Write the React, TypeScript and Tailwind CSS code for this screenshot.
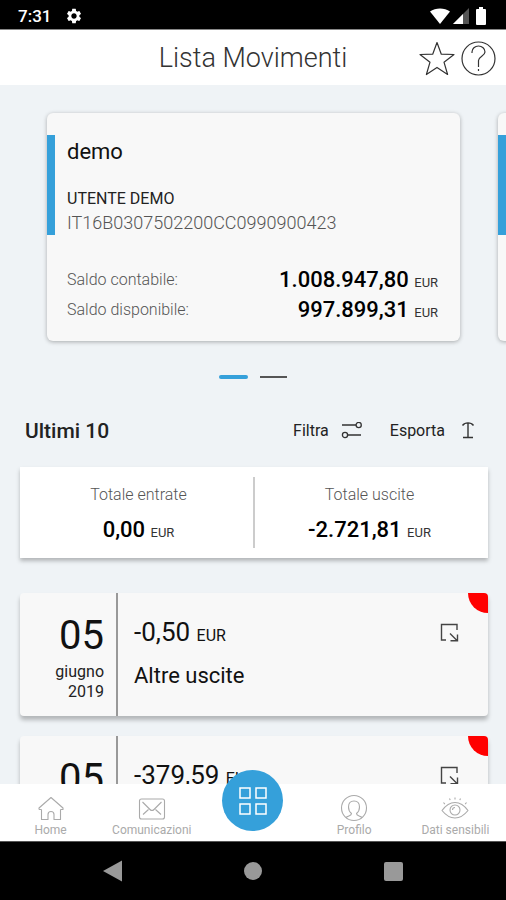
import type { ReactNode } from "react";
import { MdSettings } from "react-icons/md";

const Amount = ({ value, className = "" }: { value: string; className?: string }) => {
    return(
        <span className={`block whitespace-nowrap text-[22px] font-medium text-black ${className}`}>
            {value} <span className="text-[13px] leading-none font-normal text-[#333]">EUR</span>
        </span>
    )
};

const StatusBar = () => {
    return(
        <div className="flex h-[29px] shrink-0 items-center justify-between bg-black pt-[3px] pl-[18px] pr-4 text-white">
            <div className="flex items-center gap-[14px]">
                <span className="text-[17px] leading-5 font-medium">7:31</span>
                <MdSettings size={18} />
            </div>
            <div className="flex items-center gap-[3px]">
                <svg width="20" height="16" viewBox="0 0 20 16" fill="#fff">
                    <path d="M0 3.6C5.5-.6 14.5-.6 20 3.6L10 16Z" />
                </svg>
                <svg width="16" height="16" viewBox="0 0 16 16">
                    <path d="M16 0V16H0Z" fill="#555" />
                    <path d="M10 6V16H0Z" fill="#fff" />
                </svg>
                <svg width="18" height="18" viewBox="0 0 18 18" fill="#fff">
                    <path d="M7 0h4v2h2q1 0 1 1v14q0 1-1 1h-8q-1 0-1-1V3q0-1 1-1H7Z" />
                </svg>
            </div>
        </div>
    )
};

const Header = () => {
    return(
        <header className="grid h-14 shrink-0 grid-cols-[1fr_auto_1fr] items-center border-t border-[#888] bg-white pt-[2px]">
            <h1 className="col-start-2 text-[27px] font-light text-[#333]">Lista Movimenti</h1>
            <div className="flex items-center justify-end gap-[6px] pr-[10px]">
                <button type="button" aria-label="Preferiti">
                    <svg width="36" height="36" viewBox="0 0 36 36" fill="none" stroke="#333" strokeWidth="1.2" strokeLinejoin="round">
                        <path d="M18 1.5L22.3 13.2L35 13.5L25 21.2L28.6 33.5L18 26.4L7.4 33.5L11 21.2L1 13.5L13.7 13.2Z" />
                    </svg>
                </button>
                <button type="button" aria-label="Aiuto">
                    <svg width="35" height="35" viewBox="0 0 35 35" fill="none" stroke="#333" strokeWidth="1.2">
                        <circle cx="17.5" cy="17.5" r="16.5" />
                        <path d="M11 12v-1a6.5 6 0 0 1 13 0c0 4-6.5 4.5-6.500 8.5v6.500M17.5 28v2" />
                    </svg>
                </button>
            </div>
        </header>
    )
};

const AccountCard = () => {
    return(
        <li className="w-[90%] shrink-0 rounded-md bg-[#f8f8f8] pt-[22px] pb-4 shadow-[0_1px_4px_rgba(0,0,0,0.3)]">
            <div className="border-l-8 border-[#35a0da] pl-3">
                <h2 className="text-[22px] leading-[34px] text-[#111]">demo</h2>
                <p className="mt-[18px] text-[16px] leading-6 text-[#222]">UTENTE DEMO</p>
                <p className="text-[18px] leading-6 font-light text-[#555]">IT16B0307502200CC0990900423</p>
            </div>
            <dl className="mt-[30px] pl-5 pr-[22px] leading-[30px]">
                <div className="flex justify-between">
                    <dt className="text-[16px] font-light text-[#555]">Saldo contabile:</dt>
                    <dd><Amount value="1.008.947,80" /></dd>
                </div>
                <div className="flex justify-between">
                    <dt className="text-[16px] font-light text-[#555]">Saldo disponibile:</dt>
                    <dd><Amount value="997.899,31" /></dd>
                </div>
            </dl>
        </li>
    )
};

const Total = ({ label, value }: { label: string; value: string }) => {
    return(
        <div className="flex flex-1 flex-col items-center pt-[2px]">
            <span className="text-[16px] leading-8 font-light text-[#555]">{label}</span>
            <Amount value={value} className="leading-[37px]" />
        </div>
    )
};

const Movement = ({ value }: { value: string }) => {
    return(
        <li className="relative flex overflow-hidden rounded-[4px] bg-[#f8f8f8] shadow-[0_4px_4px_rgba(0,0,0,0.25)]">
            <div className="w-[98px] border-r-2 border-[#999] pt-5 pr-3 pb-[14px] text-right text-[#222]">
                <div className="text-[40px] leading-[46px] text-[#111]">05</div>
                <div className="mt-[3px] text-[16px] leading-5">giugno</div>
                <div className="text-[16px] leading-5">2019</div>
            </div>
            <div className="flex-1 pt-[21px] pl-4 text-[#111]">
                <div className="text-[26px] leading-9">{value} <span className="text-[16px] leading-none">EUR</span></div>
                <div className="mt-[10px] text-[22px] leading-8">Altre uscite</div>
            </div>
            <button type="button" aria-label="Dettaglio" className="mt-[30px] mr-[29px] self-start">
                <svg width="19" height="19" viewBox="0 0 19 19" fill="none" stroke="#444" strokeWidth="1.4">
                    <path d="M6 17H1.5V1.5H17V7" />
                    <path d="M10 10.5L17 17.5M17.5 11.5V17.800H10.5" />
                </svg>
            </button>
            <span className="absolute top-0 right-0 size-5 rounded-bl-full bg-[#ff0000]" />
        </li>
    )
};

const NavItem = ({ label, icon }: { label: string; icon: ReactNode }) => {
    return(
        <a href="#" className="flex flex-col items-center pt-[10px] text-[12px] leading-4 text-[#aaa]">
            <svg width="28" height="28" viewBox="0 0 28 28" fill="none" stroke="#aaa" strokeWidth="1.1" strokeLinejoin="round">{icon}</svg>
            <span className="whitespace-nowrap">{label}</span>
        </a>
    )
};

const BottomNav = () => {
    return(
        <nav className="relative grid h-[57px] shrink-0 grid-cols-5 bg-white">
            <NavItem label="Home" icon={<path d="M4.5 15.5V25.5H11v-5a3 3 0 0 1 6 0v5h6.500V15.500M2 15.500V14L14 3.500L26 14V15.500H23.500M2 15.500H4.500" />} />
            <NavItem label="Comunicazioni" icon={<><rect x="1.5" y="5" width="25" height="20" rx="2" /><path d="M4.5 8L12 15.500Q14 17.500 16 15.500L23.5 8M5 20.5L10.5 15.5M23 20.5L17.5 15.5" /></>} />
            <div className="flex justify-center">
                <button type="button" aria-label="Menu" className="-mt-[14px] flex size-[61px] items-center justify-center rounded-full bg-[#35a0da]">
                    <svg width="28" height="28" viewBox="0 0 28 28" fill="none" stroke="#fff" strokeWidth="1.5">
                        <rect x="1" y="1" width="10" height="10" />
                        <rect x="17" y="1" width="10" height="10" />
                        <rect x="1" y="17" width="10" height="10" />
                        <rect x="17" y="17" width="10" height="10" />
                    </svg>
                </button>
            </div>
            <NavItem label="Profilo" icon={<><circle cx="14" cy="14" r="12.5" /><path d="M6 23.5c2-2 5.500-1.500 5.500-4c-2-1.500-3-4-3-6.500c0-4 2-6 5.500-6s5.500 2 5.500 6c0 2.500-1 5-3 6.500c0 2.500 3.500 2 5.500 4" /></>} />
            <NavItem label="Dati sensibili" icon={<><path d="M1 16.5c4-5.500 8-8 13-8s9 2.500 13 8c-4 5-8 7.500-13 7.500s-9-2.500-13-7.500Z" /><circle cx="14" cy="16" r="5" /><path d="M11.500 16a2.500 2.500 0 0 1 2.500-2.500" /><path d="M14 3.500v2M8.500 4.500l.7 1.600M19.500 4.500l-.7 1.600M2.500 8.500l1.300 1.600M25.500 8.500l-1.300 1.600" /></>} />
        </nav>
    )
};

const SystemBar = () => {
    return(
        <div className="grid h-[59px] shrink-0 grid-cols-3 place-items-center border-t border-[#555] bg-black px-[43px]">
            <button type="button" aria-label="Indietro">
                <svg width="20" height="22" viewBox="0 0 20 22" fill="#999"><path d="M0 11L19 0.5V21.5Z" /></svg>
            </button>
            <button type="button" aria-label="Schermata principale" className="size-[18px] rounded-full bg-[#999]" />
            <button type="button" aria-label="Recenti" className="size-[19px] rounded-[2px] bg-[#999]" />
        </div>
    )
};

const App = () => {
    return(
        <div className="flex h-screen flex-col bg-[#eff3f6] font-['Roboto',sans-serif]">
            <StatusBar />
            <Header />
            <main className="min-h-0 flex-1 overflow-hidden pt-7">
                <ul className="flex gap-[38px] pl-[47px]">
                    <AccountCard />
                    <AccountCard />
                </ul>
                <div className="mt-[34px] flex h-1 items-center justify-center gap-3">
                    <span className="h-1 w-[29px] rounded-full bg-[#35a0da]" />
                    <span className="h-[2px] w-[27px] bg-[#555]" />
                </div>
                <div className="mt-9 flex items-center pl-[25px] pr-[31px] leading-8 text-[#222]">
                    <h2 className="flex-1 text-[21px] font-medium">Ultimi 10</h2>
                    <button type="button" className="flex items-center gap-3 text-[16px]">
                        Filtra
                        <svg width="22" height="18" viewBox="0 0 22 18" fill="none" stroke="#333" strokeWidth="1.3">
                            <path d="M1 3H15M7 13H20" />
                            <circle cx="17.7" cy="3" r="2.6" />
                            <circle cx="4" cy="13" r="2.6" />
                        </svg>
                    </button>
                    <button type="button" className="ml-[27px] flex items-center gap-4 text-[16px]">
                        Esporta
                        <svg width="14" height="18" viewBox="0 0 14 18" fill="none" stroke="#333" strokeWidth="1.4">
                            <path d="M2 15.500H12M7 15.500V1M1.5 3.500C3 1.5 5 .9 7 .9S11 1.5 12.5 3.500" />
                        </svg>
                    </button>
                </div>
                <section className="mr-[18px] ml-5 mt-5 flex divide-x-2 divide-[#ccc] bg-white px-1 py-[10px] shadow-[0_3px_4px_rgba(0,0,0,0.25)]">
                    <Total label="Totale entrate" value="0,00" />
                    <Total label="Totale uscite" value="-2.721,81" />
                </section>
                <ul className="mr-[18px] ml-5 mt-[35px] flex flex-col gap-5">
                    <Movement value="-0,50" />
                    <Movement value="-379,59" />
                </ul>
            </main>
            <BottomNav />
            <SystemBar />
        </div>
    )
};
export default App;
